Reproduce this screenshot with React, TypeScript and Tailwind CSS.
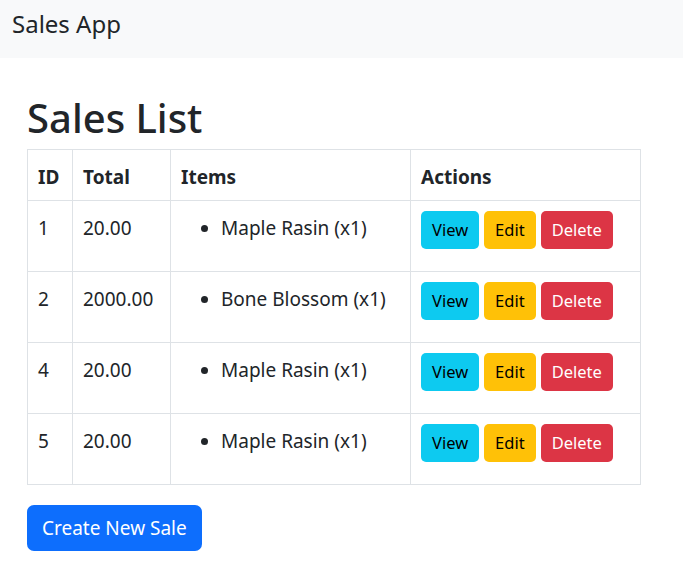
const sales = [
  { id: 1, total: '20.00', item: 'Maple Rasin (x1)' },
  { id: 2, total: '2000.00', item: 'Bone Blossom (x1)' },
  { id: 4, total: '20.00', item: 'Maple Rasin (x1)' },
  { id: 5, total: '20.00', item: 'Maple Rasin (x1)' },
];

const cell = 'border border-[#dee2e6] px-[10px] pt-[12px] pb-[8px] text-left align-top';

export default function App() {
  return (
    <div className="min-h-[580px] bg-white text-[#212529] font-['Noto_Sans',sans-serif]">
      <nav className="h-[58px] bg-[#f8f9fa] px-[12px] pt-[6px]">
        <span className="text-[24px] leading-[36px]">Sales App</span>
      </nav>

      <div className="px-[27px] pt-[31px]">
        <h1 className="text-[40px] font-medium leading-[58px] mb-[2px]">Sales List</h1>

        <table className="w-[614px] border-collapse text-[19px] leading-[30px]">
          <thead>
            <tr>
              <th className={`${cell} w-[45px] font-bold`}>ID</th>
              <th className={`${cell} w-[98px] font-bold`}>Total</th>
              <th className={`${cell} w-[240px] font-bold`}>Items</th>
              <th className={`${cell} font-bold`}>Actions</th>
            </tr>
          </thead>
          <tbody>
            {sales.map((s) => (
              <tr key={s.id}>
                <td className={cell}>{s.id}</td>
                <td className={cell}>{s.total}</td>
                <td className={cell}>
                  <ul className="list-disc pl-[40px] mb-[20px]">
                    <li>{s.item}</li>
                  </ul>
                </td>
                <td className="border border-[#dee2e6] px-[10px] pt-[10px] pb-[10px] align-top">
                  <div className="flex gap-[5px] h-[50px]">
                    <button className="h-[38px] px-[11px] rounded-[5px] bg-[#0dcaf0] text-black text-[16.5px]">View</button>
                    <button className="h-[38px] px-[11px] rounded-[5px] bg-[#ffc107] text-black text-[16.5px]">Edit</button>
                    <button className="h-[38px] px-[11px] rounded-[5px] bg-[#dc3545] text-white text-[16.5px]">Delete</button>
                  </div>
                </td>
              </tr>
            ))}
          </tbody>
        </table>

        <button className="mt-[20px] h-[46px] px-[15px] rounded-[7px] bg-[#0d6efd] text-white text-[19px]">
          Create New Sale
        </button>
      </div>
    </div>
  );
}
